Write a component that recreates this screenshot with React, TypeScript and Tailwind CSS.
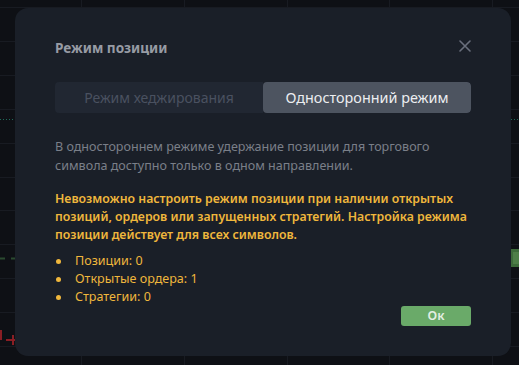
import React from "react";

const font = { fontFamily: '"Noto Sans", "Open Sans", sans-serif' };

function Background() {
  const hs = [7, 41, 75, 109, 143, 177, 210, 244, 278, 312, 346];
  const vs = [81, 184, 287, 389, 492];
  return (
    <svg className="absolute inset-0" width="519" height="365">
      {hs.map((y) => (
        <line key={"h" + y} x1="0" x2="519" y1={y + 0.5} y2={y + 0.5} stroke="#181b22" strokeWidth="1" />
      ))}
      {vs.map((x) => (
        <line key={"v" + x} x1={x + 0.5} x2={x + 0.5} y1="0" y2="365" stroke="#181b22" strokeWidth="1" />
      ))}
      <line x1="0" x2="15" y1="119.5" y2="119.5" stroke="#1f6b5a" strokeWidth="1" strokeDasharray="1 2" />
      <line x1="511" x2="519" y1="119.5" y2="119.5" stroke="#1f6b5a" strokeWidth="1" strokeDasharray="1 2" />
      <line x1="0" x2="15" y1="258.5" y2="258.5" stroke="#2a4a30" strokeWidth="2" strokeDasharray="5 6" />
      <rect x="511" y="249" width="8" height="18" fill="#3d6b3a" />
      <rect x="513" y="252" width="6" height="12" fill="#4e7f48" />
      <rect x="0" y="330" width="2" height="10" fill="#8a1e24" />
      <rect x="6" y="339" width="9" height="2" fill="#8a1e24" />
      <rect x="12" y="335" width="2" height="10" fill="#8a1e24" />
    </svg>
  );
}

export default function App() {
  return (
    <div className="relative w-[519px] h-[365px] overflow-hidden bg-[#0e1015]" style={font}>
      <Background />
      <div className="absolute left-[15px] top-[8px] w-[496px] h-[348px] rounded-[13px] bg-[#1a1f28] px-[40px] pt-[30px] pb-[30px] flex flex-col">
        <div className="flex items-center justify-between h-[20px]">
          <div className="text-[13.6px] font-bold text-[#979ba4] leading-[20px]">Режим позиции</div>
          <svg width="12" height="12" viewBox="0 0 12 12" className="mr-[0px] mt-[-5px]">
            <path d="M1 1 L11 11 M11 1 L1 11" stroke="#6a6f7d" strokeWidth="1.6" strokeLinecap="round" />
          </svg>
        </div>
        <div className="mt-[24px] flex h-[32px] rounded-[4px] overflow-hidden">
          <div className="flex-1 bg-[#212732] text-[#4a5160] text-[14px] flex items-center justify-center">
            Режим хеджирования
          </div>
          <div className="flex-1 bg-[#4d5460] text-[#eceef1] text-[14.4px] flex items-center justify-center rounded-[4px]">
            Односторонний режим
          </div>
        </div>
        <p className="mt-[24px] text-[12.55px] leading-[19px] text-[#7a7f89]">
          В одностороннем режиме удержание позиции для торгового символа доступно только в одном направлении.
        </p>
        <p className="mt-[15px] text-[12.3px] leading-[18px] font-semibold text-[#f0b73c]">
          Невозможно настроить режим позиции при наличии открытых позиций, ордеров или запущенных стратегий. Настройка режима позиции действует для всех символов.
        </p>
        <ul className="mt-[8px] text-[12.55px] leading-[18px] text-[#f0b73c]">
          {["Позиции: 0", "Открытые ордера: 1", "Стратегии: 0"].map((t) => (
            <li key={t} className="flex items-center">
              <span className="w-[5px] h-[5px] rounded-full bg-[#f0b73c] ml-[1px] mr-[14px]" />
              {t}
            </li>
          ))}
        </ul>
        <div className="flex justify-end mt-auto">
          <button className="w-[70px] h-[20px] rounded-[3px] bg-[#6aaa69] text-[#e4efe3] text-[12.5px] font-semibold leading-[20px]">
            Ок
          </button>
        </div>
      </div>
    </div>
  );
}
